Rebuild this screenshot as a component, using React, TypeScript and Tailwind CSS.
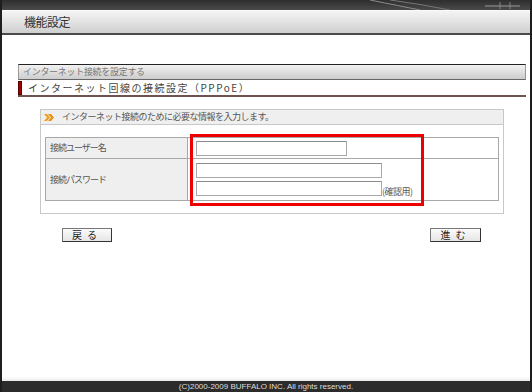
import React from "react";

const jp = { fontFamily: '"Noto Sans CJK JP", "Noto Sans", sans-serif' };

const Field: React.FC<{ w: string }> = ({ w }) => (
  <input
    type="text"
    className={`${w} h-[15px] border border-[#a8a8a8] border-t-[#8c8c8c] bg-white outline-none`}
  />
);

const App: React.FC = () => {
  return (
    <div
      className="w-[532px] h-[392px] flex flex-col bg-white border-x-2 border-[#1e1e1e] overflow-hidden"
      style={jp}
    >
      {/* top band */}
      <div className="relative h-[10px] bg-gradient-to-b from-[#2e2e2e] to-[#4a4a4a]">
        <svg className="absolute right-0 top-0" width="160" height="10" viewBox="0 0 160 10">
          <path d="M0 0 Q30 6 50 10" stroke="#8a8a8a" strokeWidth="1" fill="none" />
          <path d="M20 0 Q50 4 80 10" stroke="#777" strokeWidth="1" fill="none" />
          <path d="M115 6 L150 6" stroke="#999" strokeWidth="1" />
          <path d="M130 2 L130 9 M140 2 L140 9" stroke="#888" strokeWidth="1" />
        </svg>
      </div>
      <div className="h-[23px] flex items-center pl-[22px] bg-gradient-to-b from-[#f4f4f4] via-[#e2e2e2] to-[#cfcfcf] border-t border-[#fafafa]">
        <span className="text-[12px] text-[#333] tracking-[-0.5px]">機能設定</span>
      </div>
      <div className="h-[2px] bg-[#4a4a4a]" />

      <div className="flex-1 flex flex-col pl-[16px] pr-[4px] pt-[29px]">
        <div className="h-[16px] flex items-center pl-[4px] bg-gradient-to-b from-[#f2f2f2] to-[#cdcdcd] border-t border-[#222] border-b border-b-[#666] border-l border-l-[#999] border-r border-r-[#999]">
          <span className="text-[9px] text-[#777] tracking-[-0.3px]">インターネット接続を設定する</span>
        </div>
        <div className="h-[17px] flex items-center border-b-2 border-[#6e5450]">
          <div className="w-[4px] h-[14px] bg-[#a30000] border border-[#500]" />
          <span className="ml-[6px] text-[10px] text-[#444] tracking-[1.5px]">
            インターネット回線の接続設定（PPPoE）
          </span>
        </div>

        <div className="relative mx-[22px] mt-[12px] border border-[#c8c8c8]">
          <div className="h-[15px] flex items-center pl-[3px] bg-[#efefef] border-b border-[#c8c8c8]">
            <svg width="10" height="7" viewBox="0 0 10 7">
              <path d="M0 0 L3 0 L6 3.5 L3 7 L0 7 L3 3.5 Z" fill="#f0a020" />
              <path d="M4 0 L7 0 L10 3.5 L7 7 L4 7 L7 3.5 Z" fill="#e89010" />
            </svg>
            <span className="ml-[8px] text-[9px] text-[#555] tracking-[-0.5px]">
              インターネット接続のために必要な情報を入力します。
            </span>
          </div>
          <div className="px-[4px] pt-[12px] pb-[12px]">
            <div className="border border-[#a8a8a8]">
              <div className="flex h-[21px] border-b border-[#a8a8a8]">
                <div className="w-[142px] bg-[#efefef] border-r border-[#a8a8a8] flex items-center pl-[4px]">
                  <span className="text-[9px] text-[#555] tracking-[-1px]">接続ユーザー名</span>
                </div>
                <div className="flex-1 flex items-center pl-[8px]">
                  <Field w="w-[151px]" />
                </div>
              </div>
              <div className="flex h-[41px]">
                <div className="w-[142px] bg-[#efefef] border-r border-[#a8a8a8] flex items-center pl-[4px]">
                  <span className="text-[9px] text-[#555] tracking-[-1px]">接続パスワード</span>
                </div>
                <div className="flex-1 flex flex-col justify-center gap-[3px] pl-[8px]">
                  <Field w="w-[186px]" />
                  <div className="flex items-end">
                    <Field w="w-[186px]" />
                    <span className="text-[9px] text-[#555] leading-none tracking-[-0.5px]">(確認用)</span>
                  </div>
                </div>
              </div>
            </div>
          </div>
          <div className="absolute left-[149px] top-[24px] w-[234px] h-[72px] border-[3px] border-[#ee0000] pointer-events-none" />
        </div>

        <div className="flex justify-between pl-[44px] pr-[45px] mt-[14px]">
          <button className="w-[50px] h-[14px] flex items-center justify-center bg-gradient-to-b from-[#fbfbfb] to-[#e6e6e6] border border-[#777] border-b-[#333] border-r-[#333] text-[10px] text-[#222] tracking-[5px] leading-none">
            戻る
          </button>
          <button className="w-[51px] h-[14px] flex items-center justify-center bg-gradient-to-b from-[#fbfbfb] to-[#e6e6e6] border border-[#777] border-b-[#333] border-r-[#333] text-[10px] text-[#222] tracking-[5px] leading-none">
            進む
          </button>
        </div>
      </div>

      <div className="h-[4px] bg-gradient-to-b from-white to-[#e8e8e8]" />
      <div className="h-[11px] bg-[#2b2b2b] flex items-center justify-center">
        <span className="text-[8px] text-[#dedede] leading-none" style={{ fontFamily: '"Liberation Sans", Arial, sans-serif' }}>
          (C)2000-2009 BUFFALO INC. All rights reserved.
        </span>
      </div>
    </div>
  );
};

export default App;
